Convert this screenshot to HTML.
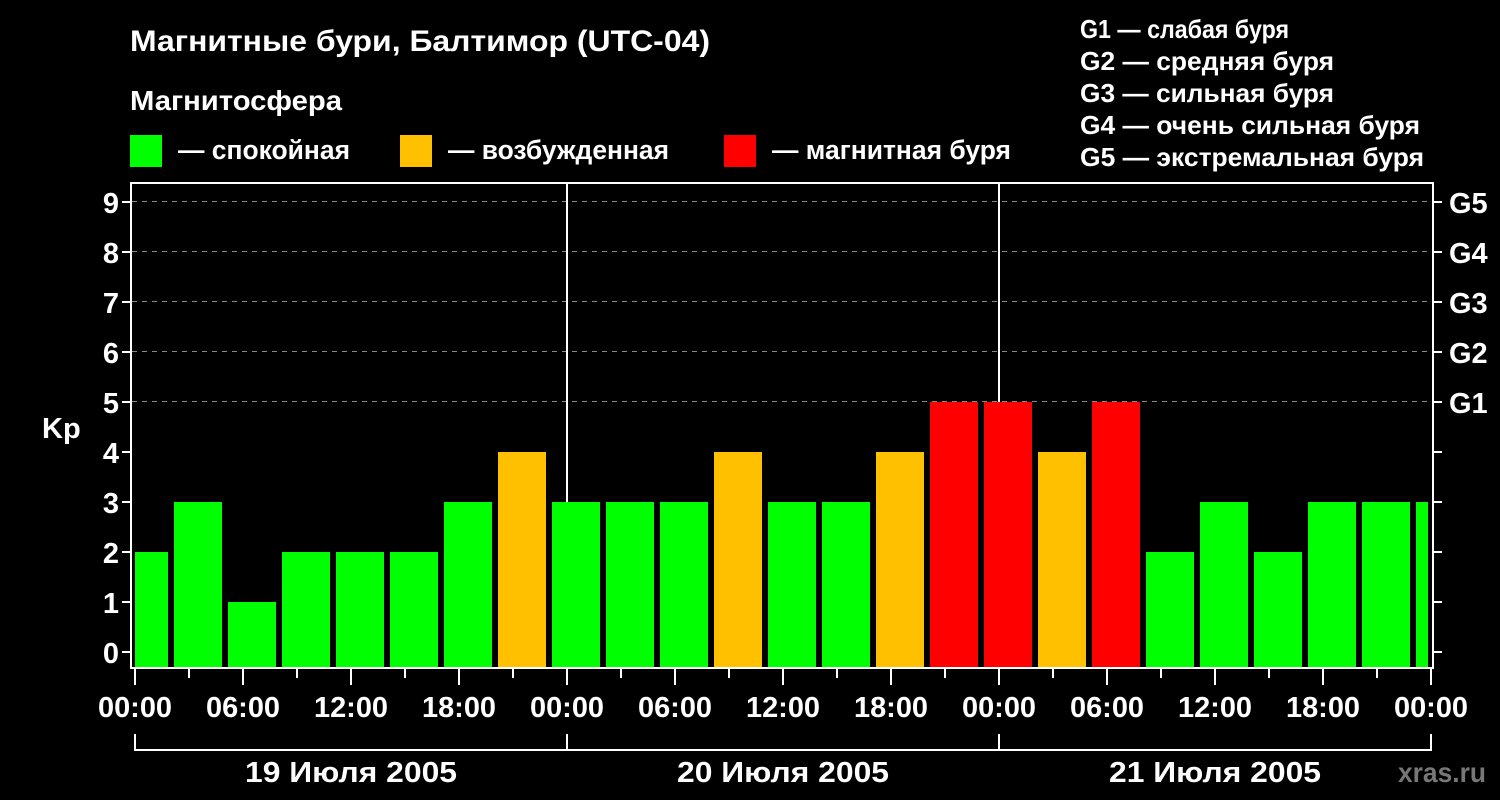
<!DOCTYPE html>
<html><head><meta charset="utf-8"><style>html,body{margin:0;padding:0;background:#000}svg{display:block}text{font-family:"Liberation Sans",Arial,sans-serif;font-weight:bold;fill:#fff}</style></head><body>
<svg width="1500" height="800" xmlns="http://www.w3.org/2000/svg">
<rect width="1500" height="800" fill="#000"/>
<text x="130" y="51" font-size="30" textLength="580" lengthAdjust="spacingAndGlyphs">Магнитные бури, Балтимор (UTC-04)</text>
<text x="130" y="110" font-size="28" textLength="212" lengthAdjust="spacingAndGlyphs">Магнитосфера</text>
<rect x="130" y="135" width="32" height="32" fill="#00ff00"/>
<text x="178" y="159" font-size="27" textLength="172" lengthAdjust="spacingAndGlyphs">— спокойная</text>
<rect x="400" y="135" width="32" height="32" fill="#ffc000"/>
<text x="448" y="159" font-size="27" textLength="221" lengthAdjust="spacingAndGlyphs">— возбужденная</text>
<rect x="724" y="135" width="32" height="32" fill="#ff0000"/>
<text x="772" y="159" font-size="27" textLength="239" lengthAdjust="spacingAndGlyphs">— магнитная буря</text>
<g font-size="26">
<text x="1080" y="38" textLength="209" lengthAdjust="spacingAndGlyphs">G1 — слабая буря</text>
<text x="1080" y="70" textLength="254" lengthAdjust="spacingAndGlyphs">G2 — средняя буря</text>
<text x="1080" y="102" textLength="254" lengthAdjust="spacingAndGlyphs">G3 — сильная буря</text>
<text x="1080" y="134" textLength="340" lengthAdjust="spacingAndGlyphs">G4 — очень сильная буря</text>
<text x="1080" y="166" textLength="344" lengthAdjust="spacingAndGlyphs">G5 — экстремальная буря</text>
</g>
<g stroke="#888" stroke-width="1" stroke-dasharray="5,5">
<line x1="132" y1="201.5" x2="1433" y2="201.5"/><line x1="132" y1="251.5" x2="1433" y2="251.5"/><line x1="132" y1="301.5" x2="1433" y2="301.5"/><line x1="132" y1="351.5" x2="1433" y2="351.5"/><line x1="132" y1="401.5" x2="1433" y2="401.5"/>
</g>
<g stroke="#fff" stroke-width="2"><line x1="567" y1="183" x2="567" y2="668"/><line x1="999" y1="183" x2="999" y2="668"/></g>
<g fill="#00ff00">
<rect x="135" y="552" width="33" height="116"/>
<rect x="174" y="502" width="48" height="166"/>
<rect x="228" y="602" width="48" height="66"/>
<rect x="282" y="552" width="48" height="116"/>
<rect x="336" y="552" width="48" height="116"/>
<rect x="390" y="552" width="48" height="116"/>
<rect x="444" y="502" width="48" height="166"/>
<rect x="552" y="502" width="48" height="166"/>
<rect x="606" y="502" width="48" height="166"/>
<rect x="660" y="502" width="48" height="166"/>
<rect x="768" y="502" width="48" height="166"/>
<rect x="822" y="502" width="48" height="166"/>
<rect x="1146" y="552" width="48" height="116"/>
<rect x="1200" y="502" width="48" height="166"/>
<rect x="1254" y="552" width="48" height="116"/>
<rect x="1308" y="502" width="48" height="166"/>
<rect x="1362" y="502" width="48" height="166"/>
<rect x="1416" y="502" width="12" height="166"/>
</g>
<g fill="#ffc000">
<rect x="498" y="452" width="48" height="216"/>
<rect x="714" y="452" width="48" height="216"/>
<rect x="876" y="452" width="48" height="216"/>
<rect x="1038" y="452" width="48" height="216"/>
</g>
<g fill="#ff0000">
<rect x="930" y="402" width="48" height="266"/>
<rect x="984" y="402" width="48" height="266"/>
<rect x="1092" y="402" width="48" height="266"/>
</g>
<rect x="131" y="183" width="1302" height="485" fill="none" stroke="#fff" stroke-width="2"/>
<path stroke="#fff" stroke-width="2" fill="none" d="M122 652H131M122 602H131M122 552H131M122 502H131M122 452H131M122 402H131M122 352H131M122 302H131M122 252H131M122 202H131
M1433 652H1442M1433 602H1442M1433 552H1442M1433 502H1442M1433 452H1442M1433 402H1442M1433 352H1442M1433 302H1442M1433 252H1442M1433 202H1442
M135 669V685M189 669V678M243 669V685M297 669V678M351 669V685M405 669V678M459 669V685M513 669V678M567 669V685M621 669V678M675 669V685M729 669V678M783 669V685M837 669V678M891 669V685M945 669V678M999 669V685M1053 669V678M1107 669V685M1161 669V678M1215 669V685M1269 669V678M1323 669V685M1377 669V678M1431 669V685"/>
<g font-size="29" text-anchor="end">
<text x="119" y="663">0</text><text x="119" y="613">1</text><text x="119" y="563">2</text><text x="119" y="513">3</text><text x="119" y="463">4</text><text x="119" y="413">5</text><text x="119" y="363">6</text><text x="119" y="313">7</text><text x="119" y="263">8</text><text x="119" y="213">9</text>
</g>
<g font-size="29">
<text x="1449" y="413">G1</text><text x="1449" y="363">G2</text><text x="1449" y="313">G3</text><text x="1449" y="263">G4</text><text x="1449" y="213">G5</text>
</g>
<text x="42" y="438" font-size="29">Kp</text>
<g font-size="29" text-anchor="middle">
<text x="135" y="717" textLength="74" lengthAdjust="spacingAndGlyphs">00:00</text><text x="243" y="717" textLength="74" lengthAdjust="spacingAndGlyphs">06:00</text><text x="351" y="717" textLength="74" lengthAdjust="spacingAndGlyphs">12:00</text><text x="459" y="717" textLength="74" lengthAdjust="spacingAndGlyphs">18:00</text>
<text x="567" y="717" textLength="74" lengthAdjust="spacingAndGlyphs">00:00</text><text x="675" y="717" textLength="74" lengthAdjust="spacingAndGlyphs">06:00</text><text x="783" y="717" textLength="74" lengthAdjust="spacingAndGlyphs">12:00</text><text x="891" y="717" textLength="74" lengthAdjust="spacingAndGlyphs">18:00</text>
<text x="999" y="717" textLength="74" lengthAdjust="spacingAndGlyphs">00:00</text><text x="1107" y="717" textLength="74" lengthAdjust="spacingAndGlyphs">06:00</text><text x="1215" y="717" textLength="74" lengthAdjust="spacingAndGlyphs">12:00</text><text x="1323" y="717" textLength="74" lengthAdjust="spacingAndGlyphs">18:00</text>
<text x="1431" y="717" textLength="74" lengthAdjust="spacingAndGlyphs">00:00</text>
<text x="351" y="782" textLength="212" lengthAdjust="spacingAndGlyphs">19 Июля 2005</text><text x="783" y="782" textLength="212" lengthAdjust="spacingAndGlyphs">20 Июля 2005</text><text x="1215" y="782" textLength="212" lengthAdjust="spacingAndGlyphs">21 Июля 2005</text>
</g>
<path d="M135 734V750H1431V734M567 734V750M999 734V750" fill="none" stroke="#fff" stroke-width="2"/>
<text x="1486" y="782" font-size="28" text-anchor="end" style="fill:#777" textLength="88" lengthAdjust="spacingAndGlyphs">xras.ru</text>
</svg>
</body></html>
